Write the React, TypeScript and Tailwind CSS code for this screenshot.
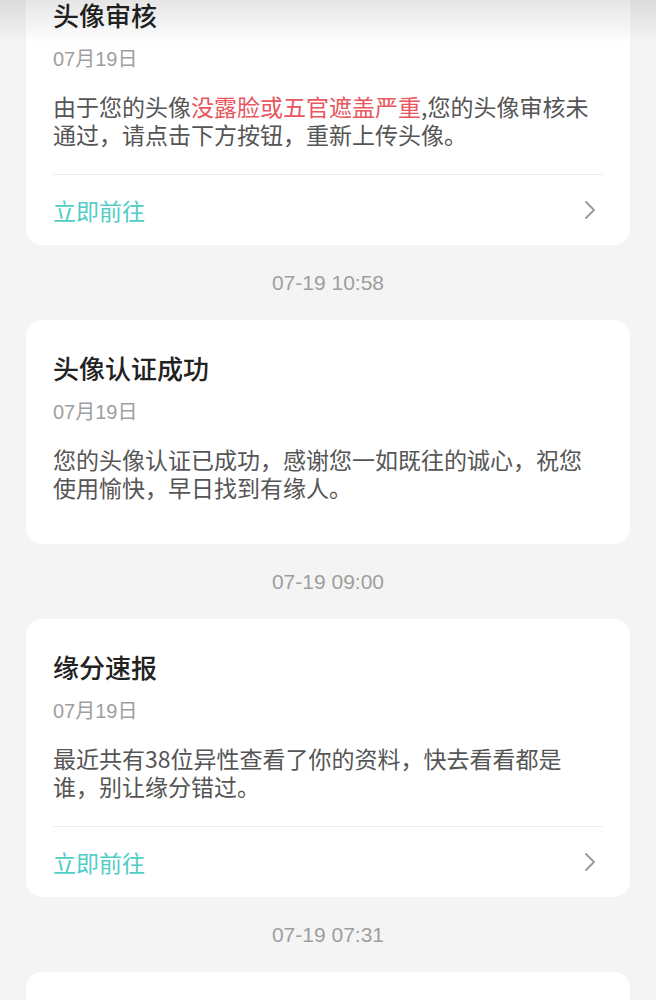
import type { JSX } from 'react'

type Notice = {
  title: string
  date: string
  body: JSX.Element | string
  action?: string
  time?: string
}

const notices: Notice[] = [
  {
    title: '头像审核',
    date: '07月19日',
    body: (
      <>
        由于您的头像<span className="text-[#e8565e]">没露脸或五官遮盖严重</span>,您的头像审核未通过，请点击下方按钮，重新上传头像。
      </>
    ),
    action: '立即前往',
    time: '07-19 10:58',
  },
  {
    title: '头像认证成功',
    date: '07月19日',
    body: '您的头像认证已成功，感谢您一如既往的诚心，祝您使用愉快，早日找到有缘人。',
    time: '07-19 09:00',
  },
  {
    title: '缘分速报',
    date: '07月19日',
    body: '最近共有38位异性查看了你的资料，快去看看都是谁，别让缘分错过。',
    action: '立即前往',
    time: '07-19 07:31',
  },
  {
    title: '系统通知',
    date: '07月19日',
    body: '欢迎来到这里，祝您早日找到有缘人。',
  },
]

const digitFont = { fontFamily: '"Liberation Sans", "Noto Sans CJK SC", sans-serif' }

function Chevron(): JSX.Element {
  return (
    <svg width="14" height="22" viewBox="0 0 14 22" fill="none">
      <path d="M3 3l8 8-8 8" stroke="#9a9a9a" strokeWidth="1.8" strokeLinecap="round" strokeLinejoin="round" />
    </svg>
  )
}

function NoticeCard({ notice }: { notice: Notice }): JSX.Element {
  return (
    <div className="rounded-[16px] bg-white px-[27px] pt-[34px]">
      <div className="text-[26px] leading-[28px] font-medium text-[#222]">{notice.title}</div>
      <div className="mt-[18px] text-[20px] leading-[24px] text-[#9e9e9e]" style={digitFont}>{notice.date}</div>
      <div className="mt-[21px] text-[23px] leading-[28px] text-[#555]">{notice.body}</div>
      {notice.action ? (
        <>
          <div className="mt-[26px] h-px bg-[#ededed]" />
          <div className="flex h-[70px] items-center justify-between">
            <span className="text-[23px] text-[#4fcdc6]">{notice.action}</span>
            <span className="mr-[6px] flex items-center">
              <Chevron />
            </span>
          </div>
        </>
      ) : (
        <div className="h-[43px]" />
      )}
    </div>
  )
}

export default function App(): JSX.Element {
  return (
    <div
      className="relative h-[1000px] w-[656px] overflow-hidden bg-[#f4f4f4]"
      style={{ fontFamily: '"Noto Sans CJK SC", "Noto Sans", sans-serif' }}
    >
      <div className="mt-[-33px] flex flex-col px-[26px]">
        {notices.map((n) => (
          <div key={n.title}>
            <NoticeCard notice={n} />
            {n.time && (
              <div className="flex h-[75px] items-center justify-center text-[21px] text-[#9e9e9e]" style={digitFont}>
                {n.time}
              </div>
            )}
          </div>
        ))}
      </div>
      {/* header shadow */}
      <div className="pointer-events-none absolute inset-x-0 top-0 h-[44px] bg-gradient-to-b from-black/10 to-transparent" />
    </div>
  )
}
